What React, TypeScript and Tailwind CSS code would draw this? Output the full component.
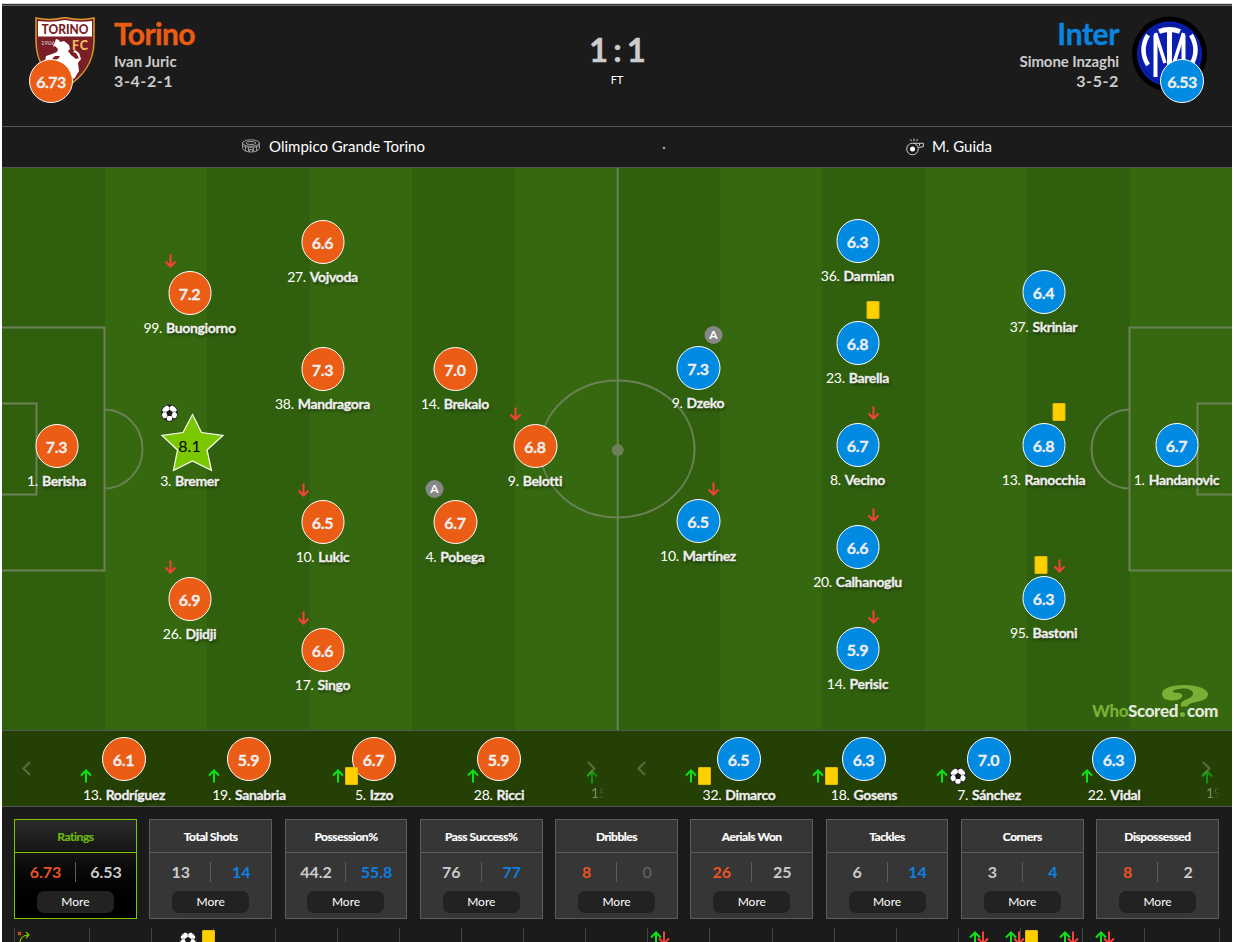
import clsx from "clsx";

type Mark = "off" | "on" | "yellow" | "goal" | "assist";

type Player = {
    x: number;
    y: number;
    no: number;
    name: string;
    rating: string;
    marks?: Mark[];
    best?: boolean;
};

// offset: distance of the last mark from the middle of the slot
type Sub = {
    no: number;
    name: string;
    rating: string;
    marks: Mark[];
    offset: number;
};

type Stat = {
    title: string;
    home: string;
    away: string;
    active?: boolean;
};

// x / y is the centre of the rating badge on the pitch
const homePlayers: Player[] = [
    {x: 54.5, y: 278, no: 1, name: "Berisha", rating: "7.3"},
    {x: 187.5, y: 125, no: 99, name: "Buongiorno", rating: "7.2", marks: ["off"]},
    {x: 187.5, y: 278, no: 3, name: "Bremer", rating: "8.1", marks: ["goal"], best: true},
    {x: 187.5, y: 431, no: 26, name: "Djidji", rating: "6.9", marks: ["off"]},
    {x: 320.5, y: 74, no: 27, name: "Vojvoda", rating: "6.6"},
    {x: 320.5, y: 201, no: 38, name: "Mandragora", rating: "7.3"},
    {x: 320.5, y: 354, no: 10, name: "Lukic", rating: "6.5", marks: ["off"]},
    {x: 320.5, y: 482, no: 17, name: "Singo", rating: "6.6", marks: ["off"]},
    {x: 453, y: 201, no: 14, name: "Brekalo", rating: "7.0"},
    {x: 453, y: 354, no: 4, name: "Pobega", rating: "6.7", marks: ["assist"]},
    {x: 533, y: 278, no: 9, name: "Belotti", rating: "6.8", marks: ["off"]},
];

const awayPlayers: Player[] = [
    {x: 696, y: 200, no: 9, name: "Dzeko", rating: "7.3", marks: ["assist"]},
    {x: 696, y: 353, no: 10, name: "Martínez", rating: "6.5", marks: ["off"]},
    {x: 855.5, y: 73, no: 36, name: "Darmian", rating: "6.3"},
    {x: 855.5, y: 175, no: 23, name: "Barella", rating: "6.8", marks: ["yellow"]},
    {x: 855.5, y: 277, no: 8, name: "Vecino", rating: "6.7", marks: ["off"]},
    {x: 855.5, y: 379, no: 20, name: "Calhanoglu", rating: "6.6", marks: ["off"]},
    {x: 855.5, y: 481, no: 14, name: "Perisic", rating: "5.9", marks: ["off"]},
    {x: 1041.5, y: 124, no: 37, name: "Skriniar", rating: "6.4"},
    {x: 1041.5, y: 277, no: 13, name: "Ranocchia", rating: "6.8", marks: ["yellow"]},
    {x: 1041.5, y: 430, no: 95, name: "Bastoni", rating: "6.3", marks: ["yellow", "off"]},
    {x: 1174.5, y: 277, no: 1, name: "Handanovic", rating: "6.7"},
];

const homeSubs: Sub[] = [
    {no: 13, name: "Rodríguez", rating: "6.1", marks: ["on"], offset: 38},
    {no: 19, name: "Sanabria", rating: "5.9", marks: ["on"], offset: 35},
    {no: 5, name: "Izzo", rating: "6.7", marks: ["on", "yellow"], offset: 22},
    {no: 28, name: "Ricci", rating: "5.9", marks: ["on"], offset: 26},
];

const awaySubs: Sub[] = [
    {no: 32, name: "Dimarco", rating: "6.5", marks: ["on", "yellow"], offset: 34},
    {no: 18, name: "Gosens", rating: "6.3", marks: ["on", "yellow"], offset: 32},
    {no: 7, name: "Sánchez", rating: "7.0", marks: ["on", "goal"], offset: 28},
    {no: 22, name: "Vidal", rating: "6.3", marks: ["on"], offset: 27},
];

const stats: Stat[] = [
    {title: "Ratings", home: "6.73", away: "6.53", active: true},
    {title: "Total Shots", home: "13", away: "14"},
    {title: "Possession%", home: "44.2", away: "55.8"},
    {title: "Pass Success%", home: "76", away: "77"},
    {title: "Dribbles", home: "8", away: "0"},
    {title: "Aerials Won", home: "26", away: "25"},
    {title: "Tackles", home: "6", away: "14"},
    {title: "Corners", home: "3", away: "4"},
    {title: "Dispossessed", home: "8", away: "2"},
];

function Arrow({up = false}: {up?: boolean}) {
    return (
        <svg
            viewBox="0 0 12 14"
            className={clsx("h-[14px] w-3 shrink-0", up ? "rotate-180 text-[#0fe01a]" : "text-[#f8403a]")}
            fill="none"
            stroke="currentColor"
            strokeWidth="2"
        >
            <path d="M6 .5v12M1 7.5l5 5 5-5"/>
        </svg>
    );
}

function Ball() {
    return (
        <svg viewBox="0 0 18 18" className="size-[18px] shrink-0">
            <circle cx="9" cy="9" r="8.3" fill="#fff" stroke="#222" strokeWidth=".9"/>
            <g fill="#1a1a1a">
                <path d="M9 5.7l3.3 2.4-1.3 3.8H7L5.7 8.1z"/>
                <path d="M6.3 1.1h5.4L9 3.3zM16.7 6l.5 4.5-2.3-1.9zM15 14.6l-3.9 2.3.7-3.2zM3 14.6l3.9 2.3-.7-3.2zM1.3 6l-.5 4.5 2.3-1.9z"/>
            </g>
            <path
                d="M9 5.7V3M12.3 8.1l2.7-.6M11 11.9l1.5 2.3M7 11.9l-1.5 2.3M5.7 8.1L3 7.5"
                stroke="#555"
                strokeWidth=".6"
            />
        </svg>
    );
}

function YellowCard() {
    return <span className="block h-[18px] w-[13px] shrink-0 rounded-[1px] border border-[#dfb80a] bg-[#ffd000]"/>;
}

function MarkIcon({mark}: {mark: Mark}) {
    if (mark === "on" || mark === "off") {
        return <Arrow up={mark === "on"}/>;
    }
    if (mark === "yellow") {
        return <YellowCard/>;
    }
    if (mark === "goal") {
        return <Ball/>;
    }
    return (
        <span className="flex size-[18px] shrink-0 items-center justify-center rounded-full bg-[#878787] text-[12px] font-bold text-white">
            A
        </span>
    );
}

function Badge({rating, away = false, narrow = false}: {rating: string; away?: boolean; narrow?: boolean}) {
    return (
        <span
            className={clsx(
                "flex h-[44px] items-center justify-center rounded-full border border-white pt-[2px] text-[16px] font-bold text-[#eee] [-webkit-text-stroke:0.3px_#eee]",
                narrow ? "w-[43px]" : "w-[44px]",
                away ? "bg-[#008ae2]" : "bg-[#eb5c15]",
                rating.length > 3 ? "tracking-[-0.5px]" : "tracking-[-0.3px]"
            )}
        >
            {rating}
        </span>
    );
}

function Label({no, name}: {no: number; name: string}) {
    return (
        <span className="flex items-baseline gap-1 text-[14px] leading-[18px] whitespace-nowrap text-white">
            <span className="tracking-[-0.3px]">{no}.</span>
            <span className="font-bold tracking-[-0.35px] text-[#eee] [-webkit-text-stroke:0.3px_#eee] [text-shadow:1px_2px_3px_rgba(0,0,0,0.5)]">
                {name}
            </span>
        </span>
    );
}

function PitchPlayer({player, away = false}: {player: Player; away?: boolean}) {
    return (
        <div
            className="absolute flex w-[141px] -translate-x-1/2 flex-col items-center"
            style={{left: player.x, top: player.y - 22}}
        >
            {player.best ? (
                <span className="relative flex h-[44px] w-[43px] items-center justify-center text-[16px] text-black">
                    <svg viewBox="0 0 64 60" className="absolute -top-[11px] -left-[8px] h-[60px] w-16 overflow-visible">
                        <path
                            d="M32 1.500L41 19.500l21.500 3-16 14.500L51 57.500 32 48 13 57.500l4-20.500L1.500 22.500l21-3z"
                            fill="#7cc800"
                            stroke="#fff"
                            strokeWidth="1.200"
                        />
                    </svg>
                    <span className="relative">{player.rating}</span>
                </span>
            ) : (
                <Badge rating={player.rating} away={away} narrow={player.x % 1 !== 0}/>
            )}
            <span className="mt-[4px]">
                <Label no={player.no} name={player.name}/>
            </span>
            {player.marks && (
                <div
                    className={clsx(
                        "absolute -top-[20px] flex h-[18px] items-center gap-[6px]",
                        away && (player.marks[0] === "assist" ? "right-[46px]" : "right-[49px]"),
                        !away && (player.marks[0] === "off" ? "left-[45px]" : "left-[41px]")
                    )}
                >
                    {player.marks.map((mark) => (
                        <span key={mark} className={clsx(mark === "off" && "pt-px")}>
                            <MarkIcon mark={mark}/>
                        </span>
                    ))}
                </div>
            )}
        </div>
    );
}

function Header() {
    return (
        <header className="flex h-[120px] justify-between">
            <div className="flex pl-[27px]">
                <div className="relative w-[85px]">
                    <svg viewBox="0 0 60 72" className="absolute top-[11px] left-[6px] h-[72px] w-[60px]">
                        <path d="M1 1q14 3 29-.5Q45 4 59 1v23c0 22-11 36-29 47C12 60 1 46 1 24z" fill="#7a1f25" stroke="#d99c2b" strokeWidth="1.500"/>
                        <path d="M3 4q14 2 27-1 13 3 27 1v15.500H3z" fill="#fff"/>
                        <text x="30" y="16.500" textAnchor="middle" fontSize="13" fontWeight="900" fill="#7a1f25" textLength="47" lengthAdjust="spacingAndGlyphs">TORINO</text>
                        <text x="6" y="28" fontSize="6" fill="#ddd">1906</text>
                        <text x="37" y="32.500" fontSize="12.500" fontWeight="900" fill="#f0bd62" textLength="16">FC</text>
                        <path
                            d="M21 22l3 1 1 2 4-1 5 4 1 4-2 2 3 4 5 4 3-1-3-5-3-1 2-2 4 3 2 6-3 4 1 8-5 8-8-6-3-6-5-4-5 1-1 3-3 0-1-4 6-3 4-1 2-3-5 0-3 3-4 0-1 3-2-1 1-5 6-2 5-2 1-3-3-3-2 1z"
                            fill="#fff"
                        />
                    </svg>
                    <div className="absolute top-[53px] left-0">
                        <Badge rating="6.73"/>
                    </div>
                </div>
                <div className="pt-[8px] font-bold text-[#ccc]">
                    <h1 className="text-[30px] leading-[38px] tracking-[-0.6px] text-[#eb5c15] [-webkit-text-stroke:0.4px_#eb5c15]">Torino</h1>
                    <p className="text-[15px] leading-[19px]">Ivan Juric</p>
                    <p className="text-[16px] leading-[20px] tracking-[0.6px]">3-4-2-1</p>
                </div>
            </div>
            <div className="absolute left-1/2 flex -translate-x-1/2 flex-col items-center pt-[22px]">
                <p className="text-[33px] leading-[43px] font-bold tracking-[-1px] whitespace-nowrap text-[#ccc] [word-spacing:-1px] [-webkit-text-stroke:0.4px_#ccc]">1 : 1</p>
                <p className="text-[11px] leading-[17px] text-white">FT</p>
            </div>
            <div className="flex pr-[26px]">
                <div className="pt-[8px] text-right font-bold text-[#ccc]">
                    <h1 className="text-[30px] leading-[38px] tracking-[-0.4px] text-[#0a84df] [-webkit-text-stroke:0.4px_#0a84df]">Inter</h1>
                    <p className="text-[15px] leading-[19px] tracking-[-0.1px]">Simone Inzaghi</p>
                    <p className="text-[16px] leading-[20px] tracking-[0.6px]">3-5-2</p>
                </div>
                <div className="relative w-[87px]">
                    <svg viewBox="0 0 76 76" className="absolute top-[10px] left-[13px] size-[76px]">
                        <circle cx="37.500" cy="38" r="37.500" fill="#000"/>
                        <circle cx="37.500" cy="38" r="32.500" fill="#0a1fb0"/>
                        <circle cx="37.500" cy="38" r="29.500" fill="none" stroke="#07157d" strokeWidth="1"/>
                        <g fill="none" stroke="#fff" strokeWidth="4.500">
                            <path d="M16 19C10 29 10 39 16 49M59 19c6 10 6 20 0 30"/>
                            <path d="M23.500 61V19M51.500 61V19" strokeWidth="4"/>
                            <path d="M23.500 17L33 47M51.500 17L42 47" strokeWidth="3.500"/>
                            <path d="M27 15.500q10.500-4 21 0" strokeWidth="5"/>
                            <path d="M37.500 14v48" strokeWidth="5"/>
                        </g>
                    </svg>
                    <div className="absolute top-[53px] left-[41px]">
                        <Badge rating="6.53" away/>
                    </div>
                </div>
            </div>
        </header>
    );
}

function Venue() {
    return (
        <div className="grid h-[41px] grid-cols-[660px_1fr] border-t border-[#555] pb-[2px] text-[15px] text-white">
            <div className="flex items-center justify-center gap-[9px] pl-[3px]">
                <svg viewBox="0 0 18 14" className="h-[14px] w-[18px]" fill="none" stroke="#aaa" strokeWidth=".9">
                    <ellipse cx="9" cy="4" rx="8.400" ry="3.200"/>
                    <ellipse cx="9" cy="4" rx="5" ry="1.500"/>
                    <path d="M.6 4v5.500C2 12 5 13 9 13s7-1 8.400-3.500V4M.6 6.500C4 9 14 9 17.400 6.500M3.500 8v4M6.500 8.500v4M11.500 8.500v4M14.500 8v4M7.500 12.500v-2h3v2"/>
                </svg>
                Olimpico Grande Torino
            </div>
            <div className="flex items-center">
                <span className="text-[#bbb]">·</span>
                <svg viewBox="0 0 18 18" className="mt-[2px] ml-[240px] size-[18px]" fill="none" stroke="#ccc" strokeWidth="1">
                    <circle cx="6.500" cy="11" r="5.800"/>
                    <circle cx="6.500" cy="11" r="2.500" fill="#fff" stroke="none"/>
                    <path d="M7 5.300h10.400v3.400l-4.900.8M13.500 5.300v2.500M8 .5v2.700M4.500 1.200l1 2M11.500 1.200l-1 2"/>
                </svg>
                <span className="ml-[8px]">M. Guida</span>
            </div>
        </div>
    );
}

function Pitch() {
    return (
        <div className="relative h-[563px] overflow-hidden border-t border-[#555]">
            <div className="grid h-full grid-cols-12">
                {Array.from({length: 12}, (_, i) => (
                    <div key={i} className={i % 2 ? "bg-[#366810]" : "bg-[#30600e]"}/>
                ))}
            </div>
            <svg viewBox="0 0 1230 562" className="absolute inset-0 h-[562px] w-[1230px]" fill="none" stroke="#6c8158" strokeWidth="2">
                <path d="M0 159.500h102.500v243H0M0 235.500h34.500v91H0M102.500 241.500a38 39.500 0 0 1 0 79"/>
                <path d="M1230 159.500h-102.500v243h102.500M1230 235.500h-34.500v91h34.500M1127.500 241.500a38 39.500 0 0 0 0 79"/>
                <path d="M615.700 0v562"/>
                <ellipse cx="615.500" cy="281" rx="77" ry="68.500"/>
                <circle cx="615.700" cy="282" r="6" fill="#6c8158" stroke="none"/>
            </svg>
            {homePlayers.map((player) => (
                <PitchPlayer key={player.name} player={player}/>
            ))}
            {awayPlayers.map((player) => (
                <PitchPlayer key={player.name} player={player} away/>
            ))}
            <div className="absolute right-[14px] bottom-[9px] flex items-end text-[17px] leading-[20px] font-black tracking-[-0.4px]">
                <span className="text-[#79b035]">Who</span>
                <span className="text-[#e2e8db]">Scored</span>
                <span className="mx-[2px] mb-[4px] size-[5px] rounded-full bg-[#79b035]"/>
                <span className="text-[#e2e8db]">com</span>
                <svg viewBox="0 0 46 22" className="absolute -top-[16px] right-[10px] h-[22px] w-[46px]">
                    <path
                        d="M0 9C0 3 10 0 23 0s23 4.500 23 9c0 6-8 7-14 8.500-4 1-6 2-7 4h-6c-1-3.500 1-5 5-7 4-1.500 7-3 7-6s-4-5-9-5-11 1-11 3 4 .5 8 2c3 1.500 1 6.500-7 7S0 13 0 9z"
                        fill="#79b035"
                    />
                </svg>
            </div>
        </div>
    );
}

function Chevron({right = false}: {right?: boolean}) {
    return (
        <svg viewBox="0 0 9 15" className={clsx("h-[15px] w-[9px]", right && "rotate-180")} fill="none" stroke="#566b3c" strokeWidth="2.200">
            <path d="M8 1L1.500 7.500 8 14"/>
        </svg>
    );
}

function Bench({subs, next, away = false}: {subs: Sub[]; next: string; away?: boolean}) {
    return (
        <div className="relative flex w-[615px] pl-[59px]">
            <div className="absolute top-[30px] left-[20px]">
                <Chevron/>
            </div>
            {subs.map((sub) => (
                <div key={sub.name} className="relative flex w-[125px] flex-col items-center pt-[6px]">
                    <Badge rating={sub.rating} away={away}/>
                    <span className="mt-[5px] pl-px">
                        <Label no={sub.no} name={sub.name}/>
                    </span>
                    <div
                        className="absolute top-[36px] flex h-[18px] items-center gap-[1.500px]"
                        style={{right: 56 + sub.offset}}
                    >
                        {sub.marks.map((mark) => (
                            <MarkIcon key={mark} mark={mark}/>
                        ))}
                    </div>
                </div>
            ))}
            <div className="absolute top-[30px] left-[585px]">
                <Chevron right/>
            </div>
            <div className="absolute top-[39px] left-[584px] text-[14px] leading-[18px] text-white">
                <span className="block opacity-50"><Arrow up/></span>
                <span className="block pl-[5px] opacity-40 [mask-image:linear-gradient(to_right,black_35%,transparent_75%)]">{next}</span>
            </div>
        </div>
    );
}

function StatBox({stat}: {stat: Stat}) {
    const home = parseFloat(stat.home);
    const away = parseFloat(stat.away);

    return (
        <div
            className={clsx(
                "flex h-[100px] flex-col border",
                stat.active ? "border-[#7cc800] bg-linear-to-b from-[#2b2b2b] to-black" : "border-[#5c5c5c] bg-[#363636]"
            )}
        >
            <h2
                className={clsx(
                    "h-[33px] border-b text-center text-[12px] leading-[34px] font-bold tracking-[-0.45px]",
                    stat.active
                        ? "border-[#7cc800] text-[#6fb80f] [-webkit-text-stroke:0.2px_#6fb80f]"
                        : "border-[#5c5c5c] text-white [-webkit-text-stroke:0.2px_#fff]"
                )}
            >
                {stat.title}
            </h2>
            <div className="mt-[9px] grid grid-cols-2 pl-px text-center text-[16px] leading-[20px] font-bold tracking-[-0.1px]">
                <span className={clsx("border-r border-[#5c5c5c]", home > away ? "text-[#eb5420]" : "text-[#ccc]")}>
                    {stat.home}
                </span>
                <span
                    className={clsx(
                        away > home && "text-[#0f7fe0]",
                        away === 0 && "font-normal text-[#666]",
                        away <= home && away > 0 && "text-[#ccc]"
                    )}
                >
                    {stat.away}
                </span>
            </div>
            <button className="mx-auto mt-[9px] h-[22px] w-[77px] rounded-[7px] bg-[#222] text-[12px] text-white">
                More
            </button>
        </div>
    );
}

function Swap() {
    return (
        <span className="flex">
            <Arrow up/>
            <span className="-ml-[4px]"><Arrow/></span>
        </span>
    );
}

function Timeline() {
    return (
        <div className="relative mt-[9px] ml-[12px] h-[14px] w-[1206px] overflow-hidden">
            <div className="flex h-full">
                <span className="w-[75px] shrink-0 border-l border-[#444]"/>
                {Array.from({length: 17}, (_, i) => (
                    <span key={i} className="w-[62.060px] shrink-0 border-l border-[#444]"/>
                ))}
                <span className="w-[76px] shrink-0 border-x border-[#444]"/>
            </div>
            {/* events pinned to their minute */}
            <svg viewBox="0 0 14 12" className="absolute top-[3px] left-[3px] h-[12px] w-[14px] overflow-visible" fill="none" strokeWidth="1.200">
                <path d="M1 1l3 3M4 1L1 4" stroke="#e55a15"/>
                <path d="M3 12c0-5 3-8 9-8M9 1l3 3-3 3" stroke="#7cc800"/>
            </svg>
            <span className="absolute top-[3px] left-[165px]"><Ball/></span>
            <span className="absolute top-[2px] left-[188px]"><YellowCard/></span>
            <span className="absolute top-[3px] left-[636px]"><Swap/></span>
            <span className="absolute top-[3px] left-[955px]"><Swap/></span>
            <span className="absolute top-[3px] left-[991px]"><Swap/></span>
            <span className="absolute top-[2px] left-[1011px]"><YellowCard/></span>
            <span className="absolute top-[3px] left-[1045px]"><Swap/></span>
            <span className="absolute top-[3px] left-[1081px]"><Swap/></span>
        </div>
    );
}

export default function App() {
    return (
        <div className="h-[942px] w-[1234px] overflow-hidden bg-white px-[2px] pt-[3px] font-['Lato',sans-serif]">
            <div className="relative h-[939px] bg-[#1b1b1b]">
                <div className="h-px bg-[#ddd]"/>
                <div className="h-px bg-[#333]"/>
                <div className="h-px bg-[#666]"/>
                <Header/>
                <Venue/>
                <Pitch/>
                <div className="flex h-[77px] border-y border-[#555] bg-[#254005]">
                    <Bench subs={homeSubs} next="15."/>
                    <Bench subs={awaySubs} next="19." away/>
                </div>
                <div className="grid grid-cols-9 gap-x-[12.300px] pt-[12px] pr-[13px] pl-[12px]">
                    {stats.map((stat) => (
                        <StatBox key={stat.title} stat={stat}/>
                    ))}
                </div>
                <Timeline/>
            </div>
        </div>
    );
}
